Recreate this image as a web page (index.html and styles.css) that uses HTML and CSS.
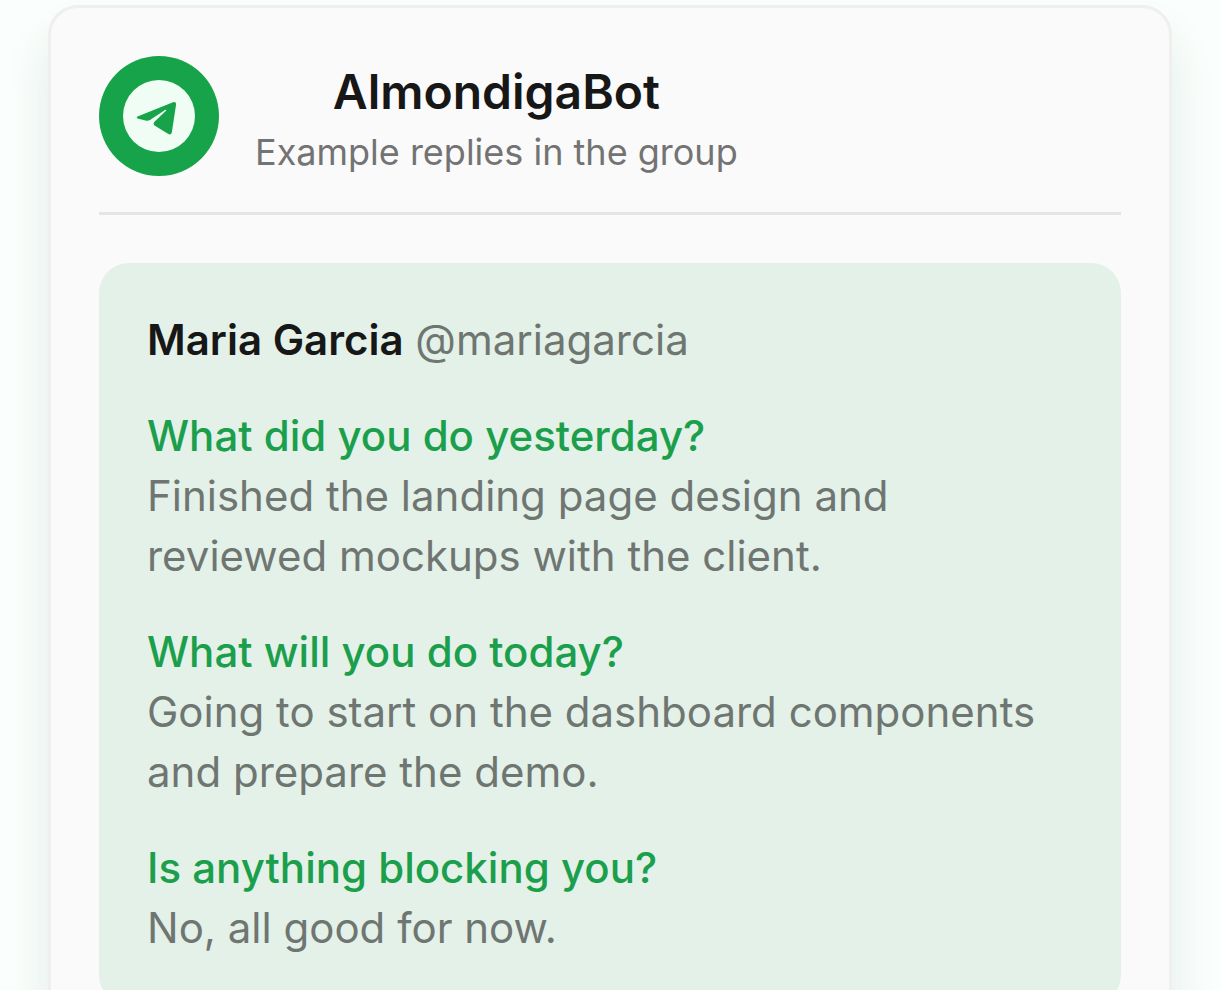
FILE: index.html
```html
<!DOCTYPE html>
<html lang="en">
<head>
  <meta charset="UTF-8" />
  <meta name="viewport" content="width=device-width, initial-scale=1.0"/>
  <title>AlmondigaBot</title>
  <link rel="stylesheet" href="styles.css">
</head>
<body>
  <main class="card">
    <header class="card-header">
      <div class="avatar">
        <svg viewBox="0 0 72 72" aria-hidden="true">
          <circle cx="36" cy="36" r="36" fill="#f0fdf4"/>
          <path fill="#16a34a" d="M14.500 36.500 50 22.200Q53.400 21.200 53 25L48.800 52.500Q48 55.500 45 53.800L31.500 45.500Q29.800 44 31.200 42L43.300 30.600Q43.500 29.300 42 30L27 40Q25.500 41 23.500 40.800L15.500 38.800Q12.500 37.700 14.500 36.500Z"/>
        </svg>
      </div>
      <div class="title">
        <h1>AlmondigaBot</h1>
        <p>Example replies in the group</p>
      </div>
    </header>

    <section class="message">
      <p class="author"><strong>Maria Garcia</strong> <span>@mariagarcia</span></p>
      <div class="reply">
        <h2>What did you do yesterday?</h2>
        <p>Finished the landing page design and reviewed mockups with the client.</p>
      </div>
      <div class="reply">
        <h2>What will you do today?</h2>
        <p>Going to start on the dashboard components and prepare the demo.</p>
      </div>
      <div class="reply">
        <h2>Is anything blocking you?</h2>
        <p>No, all good for now.</p>
      </div>
    </section>
  </main>
</body>
</html>
```
FILE: styles.css
```css
* {
  box-sizing: border-box;
}

body {
  margin: 0;
  padding: 5px 48px;
  background-color: #fafefc;
  color: #171717;
  font-family: Inter, sans-serif;
}

/* long cards scroll without a visible bar */
html {
  scrollbar-width: none;
}

h1, h2, p {
  margin: 0;
}

.card {
  padding: 48px;
  background-color: #fafafa;
  border: 3px solid #efefef;
  border-radius: 30px;
  box-shadow: 0 30px 45px rgba(20, 83, 45, 0.1);
}

.card-header {
  display: flex;
  align-items: center;
  gap: 36px;
  padding-bottom: 36px;
  border-bottom: 3px solid #e5e5e5;
}

.avatar {
  display: flex;
  align-items: center;
  justify-content: center;
  width: 120px;
  height: 120px;
  background-color: #16a34a;
  border-radius: 50%;
}

.avatar svg {
  width: 72px;
  height: 72px;
}

.title {
  text-align: center;
}

h1 {
  font-size: 48px;
  font-weight: 600;
  line-height: 72px;
}

.title p {
  color: #737373;
  font-size: 36px;
  line-height: 48px;
}

.message {
  margin-top: 48px;
  padding: 47px 48px;
  background-color: #e3f1e8;
  border-radius: 30px;
  font-size: 42px;
  line-height: 60px;
}

.message strong {
  font-weight: 600;
}

.author span,
.reply p {
  color: #6f7672;
}

.reply {
  margin-top: 36px;
}

h2 {
  color: #1c9f4c;
  font-size: 42px;
  font-weight: 500;
  line-height: 60px;
}
```
